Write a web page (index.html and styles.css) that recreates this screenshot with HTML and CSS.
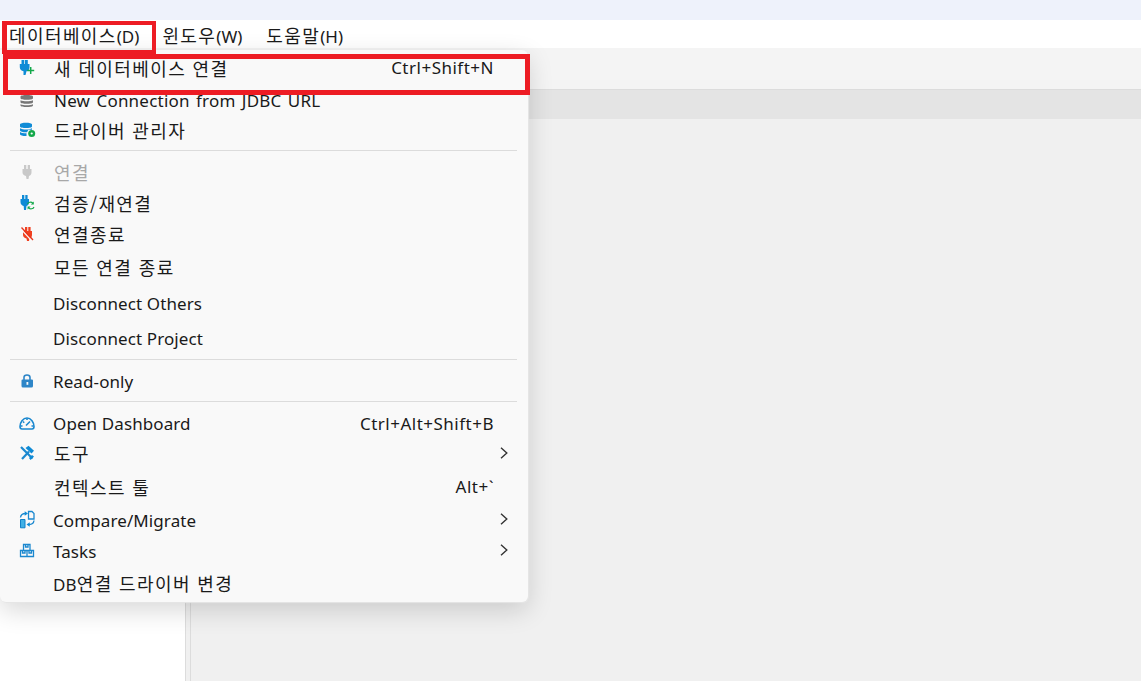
FILE: index.html
```html
<!DOCTYPE html>
<html lang="ko">
<head>
<meta charset="utf-8">
<title>DBeaver</title>
<link rel="stylesheet" href="styles.css">
</head>
<body>
<div class="app">
  <div class="titlebar"></div>
  <nav class="menubar">
    <span class="menu-title first ko">데이터베이스<span class="en">(D)</span></span>
    <span class="menu-title second ko">윈도우<span class="en">(W)</span></span>
    <span class="menu-title third ko">도움말<span class="en">(H)</span></span>
  </nav>
  <div class="toolbar"></div>
  <div class="tabband"></div>
  <div class="workspace">
    <aside class="sidebar"></aside>
    <div class="splitter"></div>
    <main class="content"></main>
  </div>
</div>

<div class="menu">
  <div class="row">
    <svg class="icon" viewBox="0 0 16 16"><path class="blue" d="M2.500 0h2.800v4h.7V0h2.800v4h1.700v3.500C10.500 10 9 11 7.500 11.300L6.500 15H4.500V11.300C2.500 10.600 .8 9.500 .8 7.200V4h1.700z"/><path class="green-line" d="M11.700 7v7M8.200 10.500h7"/></svg>
    <span class="label ko">새 데이터베이스 연결</span><span class="key">Ctrl+Shift+N</span>
  </div>
  <div class="row g5">
    <svg class="icon" viewBox="0 0 16 16"><path class="gray" d="M1.500 3.500C1.500 1.500 14 1.500 14 3.500v1.700C14 7.200 1.500 7.200 1.500 5.200zM1.500 7.200c3 1.500 9.500 1.500 12.500 0v2c0 2-12.500 2-12.500 0zM1.500 11.200c3 1.500 9.500 1.500 12.500 0v1.300c0 2-12.500 2-12.500 0z"/></svg>
    <span class="label wide">New Connection from JDBC URL</span>
  </div>
  <div class="row g1">
    <svg class="icon" viewBox="0 0 16 16"><path class="blue" d="M1 2.500C1 .3 13 .3 13 2.500v2C13 6.500 1 6.500 1 4.500zM1 6.300c3 1.700 9 1.700 12 0V7.800H9.500L8 10.300c-2.500.3-7-.3-7-2zM1 10c2 1.200 4.500 1.400 6.500 1.300v2.700c-2.500.2-6.500-.4-6.500-2z"/><circle class="green" cx="12.700" cy="11.500" r="3.500"/><circle class="hole" cx="12.700" cy="11.500" r="1.100"/></svg>
    <span class="label ko">드라이버 관리자</span>
  </div>
  <div class="sep"></div>
  <div class="row disabled">
    <svg class="icon" viewBox="0 0 16 16"><path class="light" d="M5 1h2.300v4h1.400V1H11v4h1.500v3.500c0 2-1 3-2.500 3.500L9.500 15H7.500L7 12C5 11.300 3.500 10.300 3.500 8.500V5H5z"/></svg>
    <span class="label ko">연결</span>
  </div>
  <div class="row g3">
    <svg class="icon" viewBox="0 0 16 16"><path class="blue" d="M3 0h2.300v4h1V0h2.300v4H10v3c0 2.500-1 3.500-2.500 4L7 15H5L4.700 11C2.700 10.300 1.500 9.300 1.500 7V4H3z"/><path class="green-thin" d="M8.500 9c.6-1.800 3.700-2.800 5.300-.8M15 12c-.6 1.800-3.700 2.600-5.300.8"/><path class="green" d="M14.800 6.600v3h-3zM8.600 14.500v-3h3z"/></svg>
    <span class="label ko">검증/재연결</span>
  </div>
  <div class="row g3">
    <svg class="icon" viewBox="0 0 16 16"><path class="red" d="M6 1h2.300v4h1V1h2.300v4H13v4c0 2-1 3-2.500 3.500L10 15H8L7.500 12.500C5.500 12 4 10.800 4 9V5h2z"/><path class="red-halo" d="M1.500 2.500 13 15"/><path class="red-cut" d="M2.500 1.500 14 14"/></svg>
    <span class="label ko">연결종료</span>
  </div>
  <div class="row g5"><span class="noicon"></span><span class="label ko">모든 연결 종료</span></div>
  <div class="row g9"><span class="noicon"></span><span class="label">Disconnect Others</span></div>
  <div class="row g7"><span class="noicon"></span><span class="label">Disconnect Project</span></div>
  <div class="sep loose"></div>
  <div class="row">
    <svg class="icon" viewBox="0 0 16 16"><path class="lock-line" d="M5 6V3.500C5 .2 11 .2 11 3.500V6"/><path class="lock" d="M3.500 5.500h9.500a1 1 0 0 1 1 1v5.500a1.500 1.500 0 0 1-1.500 1.500H4a1.500 1.500 0 0 1-1.500-1.500V6.500a1 1 0 0 1 1-1z"/><rect class="hole" x="7.500" y="8" width="1.800" height="2.800"/></svg>
    <span class="label">Read-only</span>
  </div>
  <div class="sep tight"></div>
  <div class="row">
    <svg class="icon" viewBox="0 0 16 16"><path class="line thick" d="M3 13h10c1 0 2-.8 2-2.500 0-4-3-8.500-7-8.500S1 6.500 1 10.500C1 12.200 2 13 3 13z"/><path class="line thick" d="M1.500 10h2M12.500 10h2M4 5.500l1.200 1.200M8 2.500V4M7 9.500 11 5.500"/></svg>
    <span class="label">Open Dashboard</span><span class="key">Ctrl+Alt+Shift+B</span>
  </div>
  <div class="row g1">
    <svg class="icon" viewBox="0 0 16 16"><path class="line2" d="M2 2l11.500 11.500"/><path class="line2" d="M3 14 10 6.500"/><path class="blue" d="M6.500 3 9.500.8 15 5.800 12.500 8.500z"/><path class="blue" d="M11.500 15 15 11.500 13 10 10 13z"/></svg>
    <span class="label ko">도구</span><svg class="chev" viewBox="0 0 8 12"><path d="M1 .8 6.800 6 1 11.200"/></svg>
  </div>
  <div class="row g6"><span class="noicon"></span><span class="label ko">컨텍스트 툴</span><span class="key">Alt+`</span></div>
  <div class="row g6">
    <svg class="icon" viewBox="0 3 16 16"><path class="line" d="M9.500 1.500h3.500l2 2v5.500H9.500z"/><path class="blue-fill" d="M1.500 9.500H6v8.300H1.500z"/><path class="line" d="M1.500 7.500c.3-2.500 2-4 5-4M15 10.500c-.3 2.500-2 4-5 4"/><path class="blue" d="M5.700 1.300 9 3.500 5.700 5.700zM10.700 12.300 7.500 14.500l3.200 2.200z"/></svg>
    <span class="label">Compare/Migrate</span><svg class="chev raised" viewBox="0 0 8 12"><path d="M1 .8 6.800 6 1 11.200"/></svg>
  </div>
  <div class="row g3">
    <svg class="icon" viewBox="0 0 16 16"><path class="line" d="M4.500 .5h6.500v6H4.500zM1.500 6.500H8v6H1.500zM8 6.500h6.500v6H8zM6.500.5v2.500h2.500V.5M3.500 6.500V9H6V6.500M10 6.500V9h2.500V6.500"/></svg>
    <span class="label">Tasks</span><svg class="chev raised" viewBox="0 0 8 12"><path d="M1 .8 6.800 6 1 11.200"/></svg>
  </div>
  <div class="row g4"><span class="noicon"></span><span class="label"><span class="en-inline">DB</span><span class="ko">연결 드라이버 변경</span></span></div>
</div>

<div class="mark mark-menu"></div>
<div class="mark mark-item"></div>
</body>
</html>
```
FILE: styles.css
```css
* { box-sizing: border-box; }
html, body { margin: 0; padding: 0; }
body {
  width: 1141px;
  height: 681px;
  overflow: hidden;
  position: relative;
  background: #f0f0f0;
  color: #1a1a1a;
  font-family: "Noto Sans", "Noto Sans CJK KR", sans-serif;
  font-size: 17px;
  letter-spacing: .1px;
}
.app { display: flex; flex-direction: column; height: 681px; }
.titlebar { height: 20px; background: #eef2fb; }
.menubar {
  height: 28px;
  background: #fff;
  display: flex;
  align-items: center;
  padding-left: 9px;
  padding-top: 3px;
  line-height: 24px;
}
.menu-title { white-space: nowrap; }
.menu-title.second { margin-left: 23px; }
.menu-title.third { margin-left: 24px; }
.en { font-family: "Noto Sans", sans-serif; font-size: 17px; letter-spacing: 0; }
.ko { font-family: "Noto Sans CJK KR", sans-serif; font-size: 18px; letter-spacing: 1.4px; }
.toolbar { height: 41px; background: #f4f4f4; }
.tabband { height: 30px; background: #e4e4e4; border-top: 1px solid #dcdcdc; }
.workspace { flex: 1; display: flex; min-height: 0; }
.sidebar { width: 185px; background: #fff; }
.splitter { width: 6px; background: #f0f0f0; border-left: 1px solid #dcdcdc; border-right: 1px solid #dcdcdc; }
.content { flex: 1; background: #f0f0f0; }

.menu {
  position: absolute;
  left: 0;
  top: 50px;
  width: 528px;
  height: 552px;
  padding: 4px 0;
  background: #f9f9f9;
  border-radius: 0 6px 6px 6px;
  box-shadow: 1px 1px 1px #e6e6e6, 0 8px 26px rgba(0, 0, 0, .16);
}
.row {
  display: flex;
  align-items: center;
  height: 28px;
  padding: 0 20px 0 19px;
  white-space: nowrap;
  line-height: 28px;
}
.g1 { margin-top: 1px; }
.g3 { margin-top: 3px; }
.g4 { margin-top: 4px; }
.g5 { margin-top: 5px; }
.g6 { margin-top: 6px; }
.g7 { margin-top: 7px; }
.g9 { margin-top: 9px; }
.icon, .noicon { width: 16px; height: 16px; flex: none; margin-right: 18px; overflow: visible; }
.label { flex: 1; }
.label.ko { padding-left: 1px; }
.label.wide { letter-spacing: .22px; word-spacing: 1.6px; padding-left: 1px; }
.key { margin-right: 14px; letter-spacing: .5px; }
.disabled .label { color: #a8a8a8; }
.sep { height: 1px; margin: 6px 11px 7px 10px; background: #dcdcdc; }
.sep.loose { margin-bottom: 8px; }
.sep.tight { margin: 5px 11px 8px 10px; }
.chev { width: 8px; height: 12px; flex: none; }
.chev path { fill: none; stroke: #333; stroke-width: 1.4; }
.chev.raised { margin-bottom: 4px; }

.blue { fill: #0f8bd6; }
.blue-fill { fill: #3fb0e6; stroke: #0f80c8; stroke-width: 1; }
.gray { fill: #777; }
.light { fill: #c9c9c9; }
.red { fill: #f04020; }
.red-cut { fill: none; stroke: #e8341c; stroke-width: 1.3; }
.red-halo { fill: none; stroke: #f9f9f9; stroke-width: 1.2; }
.green { fill: #13a84a; }
.green-line { fill: none; stroke: #13a84a; stroke-width: 1.5; }
.green-thin { fill: none; stroke: #13a84a; stroke-width: 1.1; }
.hole { fill: #f9f9f9; }
.line { fill: none; stroke: #1b88cf; stroke-width: 1.3; }
.line.thick { stroke-width: 1.6; }
.line2 { fill: none; stroke: #1b88cf; stroke-width: 2.2; }
.lock { fill: #2e86c8; }
.lock-line { fill: none; stroke: #2e86c8; stroke-width: 1.6; }

.mark { position: absolute; border-style: solid; border-color: #ed1c24; }
.mark-menu { left: 2px; top: 21px; width: 154px; height: 33px; border-width: 4px 4px 4px 5px; }
.mark-item { left: 3px; top: 54px; width: 527px; height: 41px; border-width: 5px; }
```
